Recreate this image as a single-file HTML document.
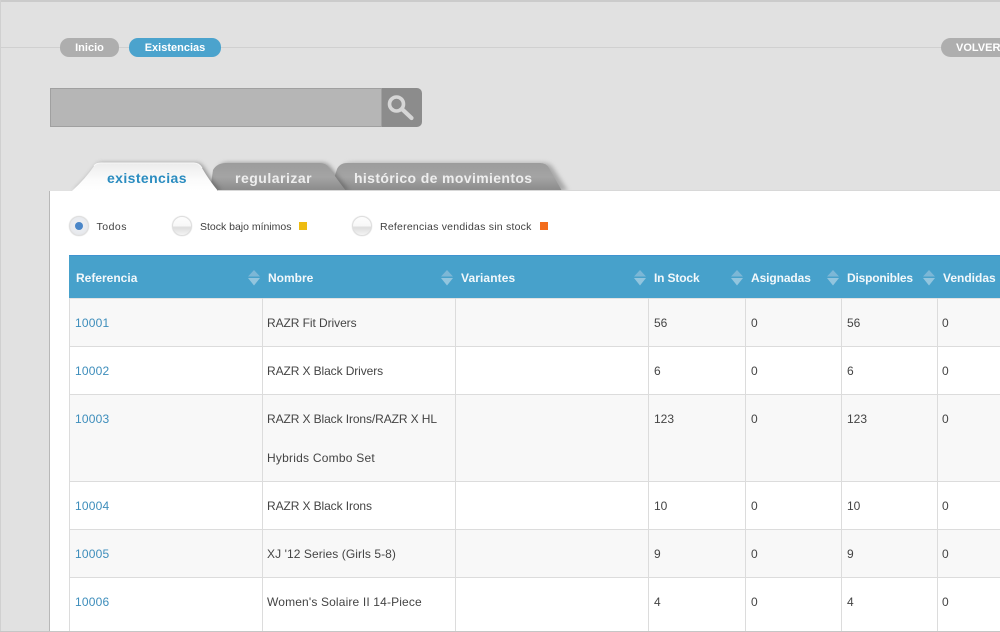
<!DOCTYPE html>
<html><head><meta charset="utf-8"><style>
html,body{margin:0;padding:0;width:1000px;height:632px;overflow:hidden;background:#e1e1e1;font-family:"Liberation Sans",Arial,sans-serif}
.a,.t,.h,.c,.l{position:absolute}
.t{white-space:nowrap}
.pill{position:absolute;top:38px;height:19px;border-radius:9px;background:#aeaeae;color:#fff;font-weight:bold;font-size:11px;line-height:21px;text-align:center}
.h{top:255px;height:43px;line-height:46px;color:#f2f8fb;font-weight:bold;font-size:12px;white-space:nowrap}
.c{font-size:12px;line-height:16px;color:#444;white-space:nowrap}
.n{color:#3d8dbb;letter-spacing:.2px}
.tab{position:absolute;font-weight:bold;font-size:14px;white-space:nowrap;top:169px;line-height:18px}
.v{position:absolute;top:298px;width:1px;height:334px;background:#dcdcdc}
.r{position:absolute;left:70px;width:930px;height:1px;background:#dcdcdc}
.s{position:absolute;left:70px;width:930px;background:#f8f8f8}
.rad{position:absolute;top:216px;width:20px;height:20px;border-radius:50%;box-sizing:border-box;border:1px solid #dedede;box-shadow:0 0 1px #ccc;background:linear-gradient(#fdfdfd 0,#f8f8f8 48%,#dddddd 58%,#f4f4f4 100%)}
.lb{position:absolute;top:219px;font-size:10.5px;line-height:17px;color:#3f3f3f;white-space:nowrap}
</style></head><body>
<div class="a" style="left:0;top:0;width:1000px;height:2px;background:#cbcbcb"></div>
<div class="a" style="left:0;top:0;width:1px;height:632px;background:#d0d0d0"></div>
<div class="a" style="left:0;top:47px;width:1000px;height:1px;background:#d0d0d0"></div>
<div class="pill" style="left:60px;width:59px">Inicio</div>
<div class="pill" style="left:129px;width:92px;background:#4ba3cd">Existencias</div>
<div class="pill" style="left:941px;width:75px;text-align:left;text-indent:15px;font-size:11px;border-radius:10px">VOLVER</div>

<div class="a" style="left:50px;top:88px;width:332px;height:39px;box-sizing:border-box;background:#b6b6b6;border:1px solid #a0a0a0"></div>
<div class="a" style="left:382px;top:88px;width:40px;height:39px;background:#8c8c8c;border-radius:0 5px 5px 0"></div>
<svg class="a" style="left:382px;top:88px" width="40" height="39" viewBox="0 0 40 39"><circle cx="14.5" cy="16" r="7" fill="none" stroke="#d6d6d6" stroke-width="3.6"/><path d="M21 22L29.5 30" stroke="#d6d6d6" stroke-width="4.2" stroke-linecap="round"/></svg>

<svg class="a" style="left:60px;top:158px" width="530" height="33" viewBox="0 0 530 33">
<defs>
<linearGradient id="g" x1="0" y1="0" x2="0" y2="1"><stop offset="0" stop-color="#9c9c9c"/><stop offset=".5" stop-color="#a4a4a4"/><stop offset="1" stop-color="#8a8a8a"/></linearGradient>
<linearGradient id="w" x1="0" y1="0" x2="0" y2="1"><stop offset="0" stop-color="#ececec"/><stop offset=".6" stop-color="#fbfbfb"/><stop offset="1" stop-color="#fff"/></linearGradient>
<filter id="b" x="-10%" y="-30%" width="120%" height="160%"><feGaussianBlur stdDeviation="2.4"/></filter>
<clipPath id="cp"><rect x="0" y="0" width="530" height="33"/></clipPath>
</defs>
<g clip-path="url(#cp)">
<path d="M272 33L280 10Q283 5 290 5H482Q488 5 491 10L506 33Z" fill="#777" opacity=".55" filter="url(#b)" transform="translate(2,0)"/>
<path d="M270 33L277 11Q280 5 287 5H480Q486 5 489 10L502 33Z" fill="url(#g)"/>
<path d="M150 33L156 11Q159 5 166 5H260Q266 5 269 10L288 33Z" fill="#5f5f5f" opacity=".65" filter="url(#b)" transform="translate(2,0)"/>
<path d="M150 33L153 12Q157 5 166 5H260Q266 5 269 10L286 33Z" fill="url(#g)"/>
<path d="M12 33Q26 20 34 8Q36 5 41 5H134Q139 5 142 10Q149 22 160 33Z" fill="#555" opacity=".6" filter="url(#b)" transform="translate(2,0)"/>
<path d="M12 33Q26 20 34 8Q36 5 41 5H134Q139 5 142 10Q149 22 158 33Z" fill="url(#w)"/>
<path d="M34 8Q36 5 41 5H134Q139 5 142 10" fill="none" stroke="#f8f8f8" stroke-width="1"/>
</g>
</svg>
<div class="tab" style="left:107px;color:#2a8cc0;letter-spacing:.4px">existencias</div>
<div class="tab" style="left:235px;color:#eeeeee;letter-spacing:.5px">regularizar</div>
<div class="tab" style="left:354px;color:#eeeeee;letter-spacing:.37px">histórico de movimientos</div>

<div class="a" style="left:50px;top:191px;width:950px;height:441px;background:#fff"></div>
<div class="a" style="left:49px;top:191px;width:1px;height:441px;background:#b8b8b8"></div>
<div class="a" style="left:218px;top:190px;width:782px;height:1px;background:#d8d8d8"></div>

<div class="rad" style="left:69px;background:radial-gradient(circle at 50% 45%,#eef0f4 0,#e8eaee 60%,#dcdcdc 100%)"></div>
<div class="a" style="left:75px;top:222px;width:8px;height:8px;border-radius:50%;background:#4a86c8"></div>
<div class="lb" style="left:96.5px;letter-spacing:.5px">Todos</div>
<div class="rad" style="left:172px"></div>
<div class="lb" style="left:200px;letter-spacing:-.01px">Stock bajo mínimos</div>
<div class="a" style="left:299px;top:222px;width:8px;height:8px;background:#eebc11"></div>
<div class="rad" style="left:352px"></div>
<div class="lb" style="left:380px;letter-spacing:.23px">Referencias vendidas sin stock</div>
<div class="a" style="left:540px;top:222px;width:8px;height:8px;background:#f36c1c"></div>

<div class="a" style="left:69px;top:255px;width:931px;height:43px;background:#47a1cb;border-top:1px solid #3f93d0;box-sizing:border-box"></div>
<div class="h" style="left:76px">Referencia</div>
<div class="h" style="left:268px">Nombre</div>
<div class="h" style="left:461px;letter-spacing:.1px">Variantes</div>
<div class="h" style="left:654px;letter-spacing:-.15px">In Stock</div>
<div class="h" style="left:751px;letter-spacing:-.1px">Asignadas</div>
<div class="h" style="left:847px;letter-spacing:-.2px">Disponibles</div>
<div class="h" style="left:943px">Vendidas</div>
<svg class="a" style="left:0;top:255px" width="1000" height="43">
<path d="M248 21.5L254 15L260 21.5Z M441 21.5L447 15L453 21.5Z M634 21.5L640 15L646 21.5Z M731 21.5L737 15L743 21.5Z M827 21.5L833 15L839 21.5Z M923 21.5L929 15L935 21.5Z" fill="#7cb7d6"/>
<path d="M248 23L254 30.5L260 23Z M441 23L447 30.5L453 23Z M634 23L640 30.5L646 23Z M731 23L737 30.5L743 23Z M827 23L833 30.5L839 23Z M923 23L929 30.5L935 23Z" fill="#92c5de"/>
</svg>

<div class="s" style="top:298px;height:48px"></div>
<div class="s" style="top:395px;height:86px"></div>
<div class="s" style="top:530px;height:47px"></div>
<div class="r" style="top:298px;background:#e3e3e3"></div>
<div class="r" style="top:346px"></div>
<div class="r" style="top:394px"></div>
<div class="r" style="top:481px"></div>
<div class="r" style="top:529px"></div>
<div class="r" style="top:577px"></div>
<div class="v" style="left:69px"></div>
<div class="v" style="left:262px"></div>
<div class="v" style="left:455px"></div>
<div class="v" style="left:648px"></div>
<div class="v" style="left:745px"></div>
<div class="v" style="left:841px"></div>
<div class="v" style="left:937px"></div>
<div class="a" style="left:0;top:631px;width:1000px;height:1px;background:#c6c6c6"></div>

<div class="c n" style="left:75px;top:315px">10001</div><div class="c" style="left:267px;top:315px;letter-spacing:-.07px">RAZR Fit Drivers</div><div class="c" style="left:654px;top:315px">56</div><div class="c" style="left:751px;top:315px">0</div><div class="c" style="left:847px;top:315px">56</div><div class="c" style="left:942px;top:315px">0</div>
<div class="c n" style="left:75px;top:363px">10002</div><div class="c" style="left:267px;top:363px;letter-spacing:-.1px">RAZR X Black Drivers</div><div class="c" style="left:654px;top:363px">6</div><div class="c" style="left:751px;top:363px">0</div><div class="c" style="left:847px;top:363px">6</div><div class="c" style="left:942px;top:363px">0</div>
<div class="c n" style="left:75px;top:411px">10003</div><div class="c" style="left:267px;top:411px;letter-spacing:-.1px">RAZR X Black Irons/RAZR X HL</div><div class="c" style="left:267px;top:450px;letter-spacing:.23px">Hybrids Combo Set</div><div class="c" style="left:654px;top:411px">123</div><div class="c" style="left:751px;top:411px">0</div><div class="c" style="left:847px;top:411px">123</div><div class="c" style="left:942px;top:411px">0</div>
<div class="c n" style="left:75px;top:498px">10004</div><div class="c" style="left:267px;top:498px;letter-spacing:-.1px">RAZR X Black Irons</div><div class="c" style="left:654px;top:498px">10</div><div class="c" style="left:751px;top:498px">0</div><div class="c" style="left:847px;top:498px">10</div><div class="c" style="left:942px;top:498px">0</div>
<div class="c n" style="left:75px;top:546px">10005</div><div class="c" style="left:267px;top:546px;letter-spacing:.08px">XJ '12 Series (Girls 5-8)</div><div class="c" style="left:654px;top:546px">9</div><div class="c" style="left:751px;top:546px">0</div><div class="c" style="left:847px;top:546px">9</div><div class="c" style="left:942px;top:546px">0</div>
<div class="c n" style="left:75px;top:594px">10006</div><div class="c" style="left:267px;top:594px;letter-spacing:.15px">Women's Solaire II 14-Piece</div><div class="c" style="left:654px;top:594px">4</div><div class="c" style="left:751px;top:594px">0</div><div class="c" style="left:847px;top:594px">4</div><div class="c" style="left:942px;top:594px">0</div>
</body></html>
